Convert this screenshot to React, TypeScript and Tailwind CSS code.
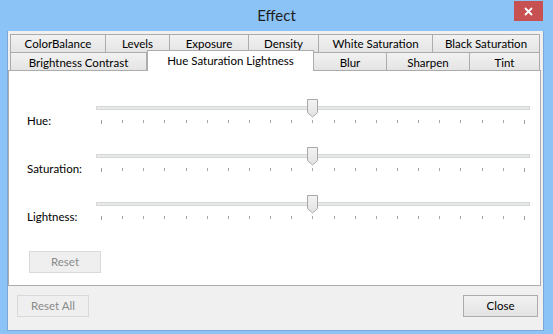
import React from "react";

const rowOne = [
  { label: "ColorBalance", w: "w-[96px] border-l" },
  { label: "Levels", w: "w-[64px]" },
  { label: "Exposure", w: "w-[79px]" },
  { label: "Density", w: "w-[70px]" },
  { label: "White Saturation", w: "w-[114px]" },
  { label: "Black Saturation", w: "w-[107px]" },
];

const rowTwo = [
  { label: "Brightness Contrast", w: "w-[137px] border-l" },
  { label: "Hue Saturation Lightness", w: "w-[167px]", active: true },
  { label: "Blur", w: "w-[73px]" },
  { label: "Sharpen", w: "w-[83px]" },
  { label: "Tint", w: "w-[70px]" },
];

function Thumb() {
  return (
    <svg width="11" height="19" viewBox="0 0 11 19" className="absolute left-[211px] top-0">
      <defs>
        <linearGradient id="tg" x1="0" y1="0" x2="0" y2="1">
          <stop offset="0" stopColor="#f3f3f3" />
          <stop offset="1" stopColor="#e2e2e2" />
        </linearGradient>
      </defs>
      <path d="M0.5 0.5 H10.5 V13.5 L5.5 18 L0.5 13.5 Z" fill="url(#tg)" stroke="#a8a8a8" />
    </svg>
  );
}

function Slider({ label }: { label: string }) {
  const ticks = Array.from({ length: 21 }, (_, i) => i);
  return (
    <div className="flex h-[48px]">
      <div className="w-[69px] pt-[14px] text-[11.5px] leading-[15px] text-black">{label}</div>
      <div className="w-[434px]">
        <div className="relative h-[18px]">
          <div className="absolute left-0 right-0 top-[7px] h-[4px] border border-[#d6d6d6] bg-[#e7eaea]" />
          <Thumb />
        </div>
        <div className="mt-[3px] flex justify-between px-[5px]">
          {ticks.map((t) => (
            <div
              key={t}
              className={t === 0 || t === 20 ? "h-[4px] w-px bg-[#a0a0a0]" : "h-[3px] w-px bg-[#a8a8a8]"}
            />
          ))}
        </div>
      </div>
    </div>
  );
}

export default function App() {
  return (
    <div className="flex h-[334px] w-[553px] flex-col bg-[#8bc3f6] font-['Lato','Liberation_Sans',sans-serif]">
      <div className="grid h-[31px] grid-cols-[1fr_auto_1fr]">
        <div />
        <div className="pt-[6px] text-[15px] leading-[19px] text-[#1e1e1e]">Effect</div>
        <div className="flex justify-end pr-[10px] pt-[1px]">
          <div className="flex h-[20px] w-[29px] items-center justify-center bg-[#c75050]">
            <svg width="9" height="9" viewBox="0 0 9 9">
              <path d="M1 1 L8 8 M8 1 L1 8" stroke="#fff" strokeWidth="1.8" />
            </svg>
          </div>
        </div>
      </div>

      <div className="ml-[7px] mr-[9px] flex h-[300px] flex-col border border-t-0 border-[#7aa9d8] bg-[#f0f0f0]">
        <div className="mr-[2px] mt-[3px] flex flex-col">
          <div className="flex pl-[2px]">
            {rowOne.map((t) => (
              <div
                key={t.label}
                className={`${t.w} flex h-[19px] items-center justify-center border-y border-r border-[#acacac] bg-linear-to-b from-[#f2f2f2] to-[#e4e4e4] text-[11.5px] leading-[15px] text-black`}
              >
                {t.label}
              </div>
            ))}
          </div>
          <div className="flex pl-[2px]">
            {rowTwo.map((t) =>
              t.active ? (
                <div
                  key={t.label}
                  className={`${t.w} relative z-10 -mb-px -mt-[3px] flex h-[21px] justify-center border-x border-t border-[#acacac] bg-white pt-[2px] text-[11.5px] leading-[15px] text-black`}
                >
                  {t.label}
                </div>
              ) : (
                <div
                  key={t.label}
                  className={`${t.w} flex h-[17px] items-center justify-center border-r border-[#acacac] bg-linear-to-b from-[#f2f2f2] to-[#e4e4e4] pt-[1px] text-[11.5px] leading-[15px] text-black`}
                >
                  {t.label}
                </div>
              )
            )}
          </div>
          <div className="flex h-[216px] flex-col border border-[#acacac] bg-white pl-[18px] pt-[28px]">
            <Slider label="Hue:" />
            <Slider label="Saturation:" />
            <Slider label="Lightness:" />
            <div className="ml-[2px] mt-[8px] flex h-[22px] w-[72px] items-center justify-center border border-[#d9d9d9] bg-[#efefef] text-[11.5px] text-[#8a8a8a]">
              Reset
            </div>
          </div>
        </div>
        <div className="mt-[9px] flex items-center justify-between pl-[9px] pr-[5px]">
          <div className="flex h-[22px] w-[72px] items-center justify-center border border-[#d9d9d9] bg-[#efefef] text-[11.5px] text-[#8a8a8a]">
            Reset All
          </div>
          <div className="flex h-[22px] w-[75px] items-center justify-center border border-[#acacac] bg-linear-to-b from-[#f2f2f2] to-[#e3e3e3] text-[11.5px] text-black">
            Close
          </div>
        </div>
      </div>
    </div>
  );
}
